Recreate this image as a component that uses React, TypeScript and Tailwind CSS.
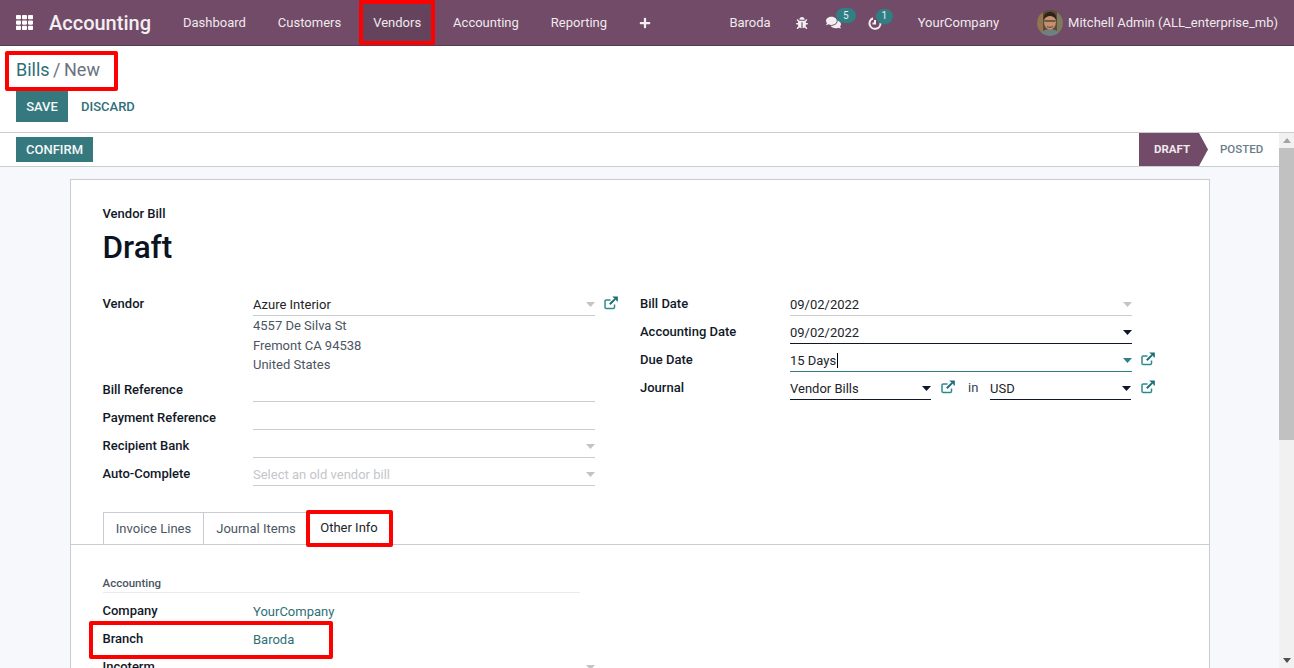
import React from "react";
import { FaBug, FaComments, FaPlus, FaTh } from "react-icons/fa";

function Caret({ c = "text-[#c4c4c4]" }: { c?: string }) {
  return (
    <svg width="9" height="5" viewBox="0 0 9 5" className={c}>
      <path d="M0 0h9L4.500 5z" fill="currentColor" />
    </svg>
  );
}

function Ext() {
  return (
    <svg width="14" height="14" viewBox="0 0 14 14" fill="none" className="mt-[2px] shrink-0">
      <path d="M10.500 8.500v2.800a1.300 1.300 0 0 1-1.300 1.300H2.300A1.300 1.300 0 0 1 1 11.300V5.300A1.300 1.300 0 0 1 2.300 4H6.500" stroke="#2f8a90" strokeWidth="1.500" />
      <path d="M5.800 8.300L11 3.100" stroke="#1b6f76" strokeWidth="2" />
      <path d="M8.300 0.500H13.800V6z" fill="#1b6f76" />
    </svg>
  );
}

function Input({
  value,
  caret,
  tone = "light",
  placeholder,
  cursor,
}: {
  value?: string;
  caret?: string;
  tone?: "light" | "dark" | "teal";
  placeholder?: string;
  cursor?: boolean;
}) {
  const border = tone === "dark" ? "border-[#0f172a]" : tone === "teal" ? "border-[#2f7f85]" : "border-[#c9ccd2]";
  return (
    <div className={`flex h-[22px] items-center justify-between border-b ${border}`}>
      <span className={`pt-px text-[13px] leading-[22px] ${placeholder ? "text-[#c4c6ca]" : "text-[#212529]"}`}>
        {value}
        {placeholder}
        {cursor && <span className="ml-px inline-block h-[15px] w-px translate-y-[3px] bg-black" />}
      </span>
      {caret && <Caret c={caret} />}
    </div>
  );
}

function Label({ children }: { children: React.ReactNode }) {
  return <div className="-mt-[1px] text-[13px] font-medium leading-[22px] text-[#111827]">{children}</div>;
}

function Nav({ children, active }: { children: React.ReactNode; active?: boolean }) {
  return (
    <div className={`flex h-full items-center px-[14px] text-[13px] text-[#f0e9ee] ${active ? "bg-[#66435d]" : ""}`}>
      {children}
    </div>
  );
}

function Avatar() {
  return (
    <svg width="26" height="26" viewBox="0 0 26 26" className="rounded-full">
      <rect width="26" height="26" fill="#5f4a38" />
      <rect x="0" y="0" width="6" height="26" fill="#8f7550" />
      <rect x="20" y="0" width="6" height="26" fill="#7d7a5e" />
      <path d="M3 26c1-5 5-7 10-7s9 2 10 7z" fill="#6f7f82" />
      <ellipse cx="13" cy="12" rx="6" ry="7.500" fill="#c4906f" />
      <path d="M6.500 10c0-6 3-8 6.500-8s6.500 2 6.500 8c-2-3-4-4-6.500-4s-4.500 1-6.500 4z" fill="#2e221d" />
      <path d="M7.500 11h11" stroke="#1f1f1f" strokeWidth="1.200" />
      <path d="M10 16.500c2 1 4 1 6 0" stroke="#6e3f33" strokeWidth="1" fill="none" />
    </svg>
  );
}

function Red({ className }: { className: string }) {
  return <div className={`pointer-events-none absolute rounded-[2px] border-[4px] border-[#fe0000] ${className}`} />;
}

export default function App() {
  const rows: [string, string, boolean][] = [
    ["Bill Reference", "", false],
    ["Payment Reference", "", false],
    ["Recipient Bank", "", true],
    ["Auto-Complete", "Select an old vendor bill", true],
  ];
  return (
    <div className="relative flex h-[668px] w-full flex-col overflow-hidden bg-white font-['Roboto',sans-serif] text-[13px]">
      {/* Navbar */}
      <nav className="flex h-[46px] shrink-0 items-center border-b border-[#5a3c53] bg-[#714b67]">
        <div className="flex h-full items-center pl-[16px] pr-[16px] text-white">
          <FaTh size={17} />
        </div>
        <div className="mr-[18px] text-[20px] font-medium text-[#f3eef2]">Accounting</div>
        <Nav>Dashboard</Nav>
        <div className="w-[4px]" />
        <Nav>Customers</Nav>
        <div className="w-[4px]" />
        <Nav active>Vendors</Nav>
        <div className="w-[4px]" />
        <Nav>Accounting</Nav>
        <div className="w-[4px]" />
        <Nav>Reporting</Nav>
        <div className="pl-[18px] text-[#f3eef2]">
          <FaPlus size={12} />
        </div>
        <div className="flex-1" />
        <div className="text-[#f0e9ee]">Baroda</div>
        <div className="ml-[25px] text-[#f3eef2]">
          <FaBug size={12} />
        </div>
        <div className="relative ml-[18px] text-[#f3eef2]">
          <FaComments size={15} />
          <span className="absolute -top-[7px] left-[10px] flex h-[15px] w-[20px] items-center justify-center rounded-full bg-[#2f7f85] text-[10px] leading-none text-[#f0e9ee]">
            5
          </span>
        </div>
        <div className="relative ml-[27px] text-[#f3eef2]">
          <svg width="14" height="14" viewBox="0 0 14 14" fill="none" stroke="currentColor" strokeWidth="2" className="block">
            <path d="M5 2.200A5.500 5.500 0 1 0 12.500 7M7 4v3.500H4.500" />
          </svg>
          <span className="absolute -top-[7px] left-[8px] flex h-[15px] w-[17px] items-center justify-center rounded-full bg-[#2f7f85] text-[10px] leading-none text-[#f0e9ee]">
            1
          </span>
        </div>
        <div className="ml-[36px] text-[#f0e9ee]">YourCompany</div>
        <div className="ml-[38px] mr-[5px] flex items-center">
          <Avatar />
        </div>
        <div className="mr-[16px] text-[#f0e9ee]">Mitchell Admin (ALL_enterprise_mb)</div>
      </nav>

      {/* Control panel */}
      <div className="h-[87px] shrink-0 border-b border-[#c9ccd2] pl-[16px]">
        <div className="h-[45px] pt-[11px] text-[18px] leading-[26px] [word-spacing:-1px]">
          <span className="text-[#2f6f78]">Bills</span>
          <span className="text-[#6b7280]"> / New</span>
        </div>
        <div className="flex items-center">
          <div className="flex h-[31px] w-[52px] items-center justify-center bg-[#35797f] text-[13px] font-medium text-[#f4f8f8]">
            SAVE
          </div>
          <div className="ml-[13px] text-[13px] font-medium text-[#2f6f78]">DISCARD</div>
        </div>
      </div>

      <div className="flex min-h-0 flex-1">
        <div className="flex min-w-0 flex-1 flex-col">
          {/* Status bar */}
          <div className="flex h-[34px] shrink-0 items-stretch justify-between border-b border-[#c9ccd2] pl-[16px]">
            <div className="flex items-center">
              <div className="flex h-[25px] w-[77px] items-center justify-center bg-[#35797f] text-[13px] font-medium text-[#f4f8f8]">
                CONFIRM
              </div>
            </div>
            <div className="flex items-stretch">
              <div className="relative flex w-[60px] items-center bg-[#714b67] pl-[15px] text-[11.5px] font-bold text-[#f0e9ee]">
                DRAFT
                <svg width="9" height="33" viewBox="0 0 9 33" className="absolute left-full top-0">
                  <path d="M0 0L9 16.500L0 33z" fill="#714b67" />
                </svg>
              </div>
              <div className="flex w-[80px] items-center pl-[21px] text-[11.5px] font-medium text-[#6b7c8a]">POSTED</div>
            </div>
          </div>

          {/* Main */}
          <div className="min-h-0 flex-1 bg-[#f7f8fb] pl-[70px] pr-[69px] pt-[12px]">
            <div className="h-[600px] border border-[#c9ccd2] bg-white pt-[26px]">
              <div className="pl-[31.500px] pr-[31px]">
                <div className="text-[13px] font-medium leading-[16px] text-[#111827]">Vendor Bill</div>
                <div className="mt-[4px] text-[31.500px] font-medium leading-[44px] text-[#0b1323]">Draft</div>
                <div className="mt-[24px] flex">
                  {/* Left group */}
                  <div className="w-[537.500px] shrink-0">
                    <div className="flex">
                      <div className="w-[150.500px]">
                        <Label>Vendor</Label>
                      </div>
                      <div className="w-[342px]">
                        <Input value="Azure Interior" caret="text-[#c4c4c4]" />
                      </div>
                      <div className="ml-[9px]">
                        <Ext />
                      </div>
                    </div>
                    <div className="ml-[150.500px] text-[13px] leading-[19.500px] text-[#4b5563]">
                      <div>4557 De Silva St</div>
                      <div>Fremont CA 94538</div>
                      <div>United States</div>
                    </div>
                    <div className="mt-[5px] flex flex-col gap-[6px]">
                      {rows.map(([l, p, c]) => (
                        <div className="flex" key={l}>
                          <div className="w-[150.500px]">
                            <Label>{l}</Label>
                          </div>
                          <div className="w-[342px]">
                            <Input placeholder={p || undefined} caret={c ? "text-[#c4c4c4]" : undefined} />
                          </div>
                        </div>
                      ))}
                    </div>
                  </div>
                  {/* Right group */}
                  <div className="flex flex-col gap-[6px]">
                    <div className="flex">
                      <div className="w-[150px]">
                        <Label>Bill Date</Label>
                      </div>
                      <div className="w-[342px]">
                        <Input value="09/02/2022" caret="text-[#c4c4c4]" />
                      </div>
                    </div>
                    <div className="flex">
                      <div className="w-[150px]">
                        <Label>Accounting Date</Label>
                      </div>
                      <div className="w-[342px]">
                        <Input value="09/02/2022" caret="text-[#0f172a]" tone="dark" />
                      </div>
                    </div>
                    <div className="flex">
                      <div className="w-[150px]">
                        <Label>Due Date</Label>
                      </div>
                      <div className="w-[342px]">
                        <Input value="15 Days" caret="text-[#2f7f85]" tone="teal" cursor />
                      </div>
                      <div className="ml-[9px]">
                        <Ext />
                      </div>
                    </div>
                    <div className="flex">
                      <div className="w-[150px]">
                        <Label>Journal</Label>
                      </div>
                      <div className="w-[141px]">
                        <Input value="Vendor Bills" caret="text-[#0f172a]" tone="dark" />
                      </div>
                      <div className="ml-[10px]">
                        <Ext />
                      </div>
                      <div className="w-[35px] pl-[13px] text-[13px] leading-[20px] text-[#374151]">in</div>
                      <div className="w-[141px]">
                        <Input value="USD" caret="text-[#0f172a]" tone="dark" />
                      </div>
                      <div className="ml-[10px]">
                        <Ext />
                      </div>
                    </div>
                  </div>
                </div>
              </div>

              {/* Tabs */}
              <div className="mt-[26px] flex h-[33px] border-b border-[#c9ccd2] pl-[32px]">
                <div className="flex h-[33px] w-[101px] items-center justify-center border border-b-0 border-[#c9ccd2] text-[#4b5563]">
                  Invoice Lines
                </div>
                <div className="flex h-[33px] w-[104px] items-center justify-center border-t border-[#c9ccd2] text-[#4b5563]">
                  Journal Items
                </div>
                <div className="flex h-[33px] w-[82px] items-center justify-center bg-white text-[#212529]">Other Info</div>
              </div>

              {/* Tab content */}
              <div className="pl-[31.500px] pt-[31px]">
                <div className="w-[477px] border-b border-[#e9ebef] pb-[1px] text-[11.500px] font-medium leading-[15px] text-[#4b5563]">
                  Accounting
                </div>
                <div className="mt-[8px] flex flex-col gap-[6px]">
                  <div className="flex h-[22px]">
                    <div className="w-[150.500px]">
                      <Label>Company</Label>
                    </div>
                    <div className="leading-[22px] text-[#2f6f78]">YourCompany</div>
                  </div>
                  <div className="flex h-[22px]">
                    <div className="w-[150.500px]">
                      <Label>Branch</Label>
                    </div>
                    <div className="leading-[22px] text-[#2f6f78]">Baroda</div>
                  </div>
                  <div className="flex h-[22px]">
                    <div className="w-[150.500px]">
                      <Label>Incoterm</Label>
                    </div>
                    <div className="w-[342px]">
                      <Input caret="text-[#c4c4c4]" />
                    </div>
                  </div>
                </div>
              </div>
            </div>
          </div>
        </div>

        {/* Scrollbar */}
        <div className="flex w-[15px] shrink-0 flex-col items-center bg-[#f1f1f1]">
          <div className="flex h-[15px] items-center justify-center">
            <svg width="8" height="5" viewBox="0 0 8 5">
              <path d="M4 0l4 5H0z" fill="#a3a3a3" />
            </svg>
          </div>
          <div className="h-[292px] w-full bg-[#c1c1c1]" />
          <div className="flex-1" />
          <div className="flex h-[15px] items-center justify-center">
            <svg width="8" height="5" viewBox="0 0 8 5">
              <path d="M4 5l4-5H0z" fill="#505050" />
            </svg>
          </div>
        </div>
      </div>

      {/* Annotation boxes */}
      <Red className="left-[359px] top-0 h-[45px] w-[76px]" />
      <Red className="left-[5px] top-[51px] h-[40px] w-[113px]" />
      <Red className="left-[306px] top-[510px] h-[37px] w-[87px]" />
      <Red className="left-[89px] top-[621px] h-[38px] w-[244px]" />
    </div>
  );
}
